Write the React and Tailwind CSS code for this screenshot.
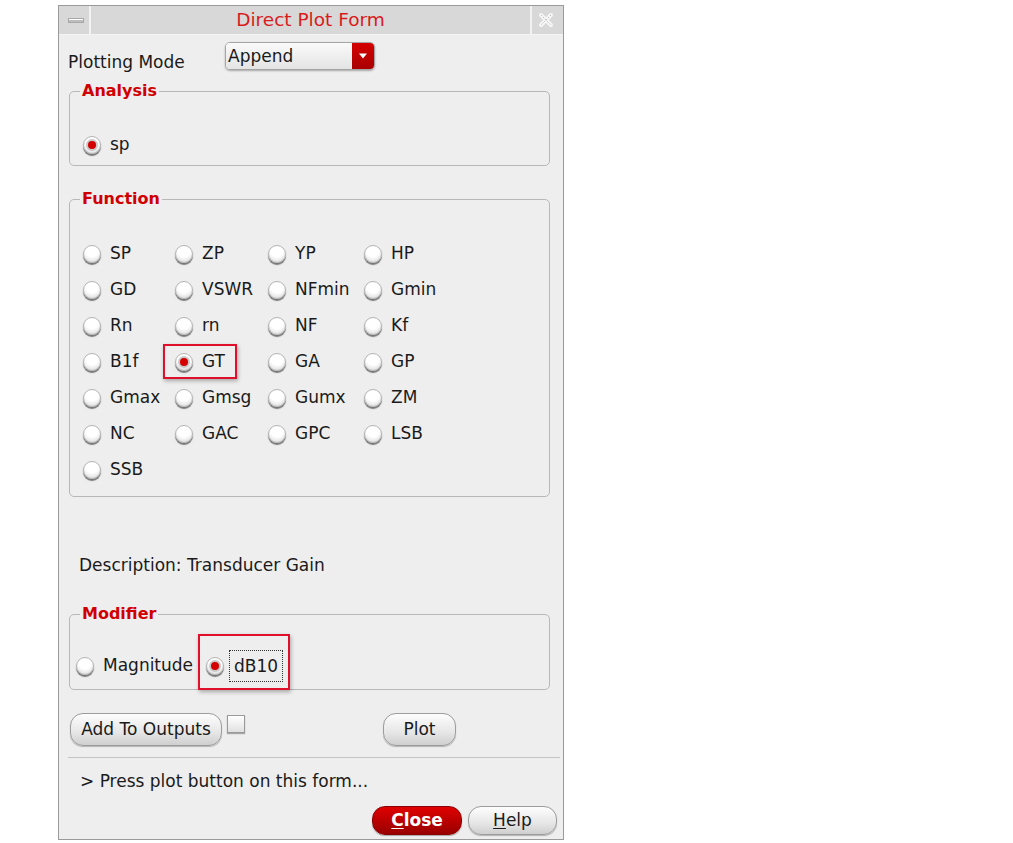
import React from 'react';

const font = { fontFamily: '"DejaVu Sans", "Liberation Sans", sans-serif' };

// radio button in the old cadence look
const Radio = ({ on }) => (
    <span className="w-[18px] h-[18px] shrink-0 rounded-full border border-[#b4b4b4] bg-[radial-gradient(circle_at_50%_30%,#ffffff_45%,#d2d2d2)] shadow-[0_2px_1px_rgba(0,0,0,0.5)] flex items-center justify-center">
        {on && <span className="w-[8px] h-[8px] rounded-full bg-[#d40000] shadow-[0_0_0_2px_#c8c8c8]" />}
    </span>
);

const Legend = ({ children }) => (
    <legend className="ml-[10px] px-[2px] text-[16px] leading-[20px] font-bold text-[#d10000]">{children}</legend>
);

const functions = [
    ['SP', 'ZP', 'YP', 'HP'],
    ['GD', 'VSWR', 'NFmin', 'Gmin'],
    ['Rn', 'rn', 'NF', 'Kf'],
    ['B1f', 'GT', 'GA', 'GP'],
    ['Gmax', 'Gmsg', 'Gumx', 'ZM'],
    ['NC', 'GAC', 'GPC', 'LSB'],
    ['SSB'],
];

const PillButton = ({ children, className = '' }) => (
    <button className={`h-[33px] rounded-[13px] border border-[#9c9c9c] bg-[linear-gradient(#fdfdfd,#e6e6e6_60%,#cfcfcf)] shadow-[0_1px_1px_rgba(0,0,0,0.25)] text-[17px] text-[#1a1a1a] ${className}`}>
        {children}
    </button>
);

export default function App() {
    return (
        <div className="w-[1013px] h-[843px] bg-white overflow-hidden" style={font}>
            <div className="ml-[58px] mt-[5px] w-[506px] h-[835px] border border-[#9a9a9a] bg-[#eeeeee] flex flex-col text-[#1a1a1a]">

                {/* title bar */}
                <div className="h-[29px] flex bg-[#d8d8d8] border-b border-[#f4f4f4]">
                    <div className="w-[29px] flex items-center justify-center border-r-2 border-[#f2f2f2] ml-[3px]">
                        <span className="w-[16px] h-[5px] bg-[#bdbdbd] border border-[#a8a8a8] shadow-[inset_0_1px_0_#ffffff]" />
                    </div>
                    <div className="flex-1 flex items-center justify-center text-[18.5px] text-[#d81c1c]">Direct Plot Form</div>
                    <div className="w-[30px] flex items-center justify-center border-l-2 border-[#f2f2f2] mr-[3px]">
                        <svg width="16" height="16" viewBox="0 0 16 16">
                            <path d="M3 3 L13 13 M13 3 L3 13" stroke="#f6f6f6" strokeWidth="4" strokeLinecap="round" />
                            <path d="M3 3 L13 13 M13 3 L3 13" stroke="#bcbcbc" strokeWidth="1" strokeDasharray="1.5 1.5" />
                        </svg>
                    </div>
                </div>

                {/* plotting mode */}
                <div className="flex pt-[7px] pl-[9px]">
                    <div className="w-[157px] pt-[10px] text-[17px] leading-[20px]">Plotting Mode</div>
                    <div className="w-[150px] h-[28px] flex rounded-[5px] border border-[#a5a5a5] overflow-hidden shadow-[0_1px_2px_rgba(0,0,0,0.3)]">
                        <div className="flex-1 bg-[linear-gradient(#fafafa,#e4e4e4)] pl-[2px] text-[17px] leading-[26px]">Append</div>
                        <div className="w-[22px] bg-[linear-gradient(#d60000,#a80000)] flex items-center justify-center">
                            <svg width="10" height="6" viewBox="0 0 10 6"><path d="M1 0.5 L9 0.5 L5 5.5 Z" fill="#ffffff" /></svg>
                        </div>
                    </div>
                </div>

                {/* analysis */}
                <fieldset className="mt-[9px] ml-[10px] mr-[13px] rounded-[5px] border border-[#b8b8b8] pt-[34px] pb-[10px]">
                    <Legend>Analysis</Legend>
                    <div className="flex items-center gap-[9px] h-[20px] pl-[13px] text-[17px]">
                        <Radio on />
                        <span>sp</span>
                    </div>
                </fieldset>

                {/* function */}
                <fieldset className="mt-[23px] ml-[10px] mr-[13px] rounded-[5px] border border-[#b8b8b8] pt-[27px] pb-[8px]">
                    <Legend>Function</Legend>
                    <div className="grid grid-cols-[92px_93px_96px_96px] auto-rows-[36px] pl-[13px] text-[17px]">
                        {functions.flat().map((f) => (
                            <div key={f} className="relative flex items-center gap-[9px]">
                                <Radio on={f === 'GT'} />
                                <span>{f}</span>
                                {f === 'GT' && (
                                    <span className="absolute left-[-12px] top-[0px] w-[74px] h-[35px] border-2 border-[#e0102a] shadow-[1px_2px_4px_rgba(0,0,0,0.3)]" />
                                )}
                            </div>
                        ))}
                    </div>
                </fieldset>

                <div className="mt-[58px] pl-[20px] text-[17px] leading-[20px]">Description: Transducer Gain</div>

                {/* modifier */}
                <fieldset className="mt-[29px] ml-[10px] mr-[13px] rounded-[5px] border border-[#b8b8b8] pt-[32px] pb-[13px]">
                    <Legend>Modifier</Legend>
                    <div className="flex items-center h-[20px] pl-[6px] text-[17px]">
                        <Radio />
                        <span className="ml-[9px]">Magnitude</span>
                        <div className="relative ml-[13px] flex items-center">
                            <Radio on />
                            <span className="ml-[5px] px-[4px] h-[32px] leading-[30px] border border-dotted border-[#333333]">dB10</span>
                            <span className="absolute left-[-8px] top-[-16px] w-[92px] h-[56px] border-2 border-[#e0102a] shadow-[1px_2px_4px_rgba(0,0,0,0.3)]" />
                        </div>
                    </div>
                </fieldset>

                {/* buttons */}
                <div className="mt-[23px] flex pl-[11px]">
                    <PillButton className="w-[152px]">Add To Outputs</PillButton>
                    <span className="ml-[5px] mt-[2px] w-[18px] h-[18px] border border-[#9a9a9a] bg-[linear-gradient(#ffffff,#e0e0e0)] shadow-[0_1px_1px_rgba(0,0,0,0.3)]" />
                    <PillButton className="ml-[138px] w-[73px]">Plot</PillButton>
                </div>

                <div className="mt-[11px] ml-[9px] mr-[3px] h-[2px] border-t border-[#c4c4c4] border-b-white" />

                <div className="mt-[12px] pl-[21px] text-[17px] leading-[20px]">&gt; Press plot button on this form...</div>

                <div className="mt-[15px] flex justify-end gap-[6px] pr-[6px]">
                    <button className="w-[90px] h-[29px] rounded-[13px] border border-[#8a0000] bg-[linear-gradient(#e00000,#b40000_60%,#9a0000)] text-white font-bold text-[17px] shadow-[0_1px_1px_rgba(0,0,0,0.3)]">
                        <span className="underline underline-offset-2">C</span>lose
                    </button>
                    <button className="w-[89px] h-[29px] rounded-[13px] border border-[#9c9c9c] bg-[linear-gradient(#fdfdfd,#e6e6e6_60%,#cfcfcf)] text-[17px] shadow-[0_1px_1px_rgba(0,0,0,0.25)]">
                        <span className="underline underline-offset-2">H</span>elp
                    </button>
                </div>
            </div>
        </div>
    );
}
